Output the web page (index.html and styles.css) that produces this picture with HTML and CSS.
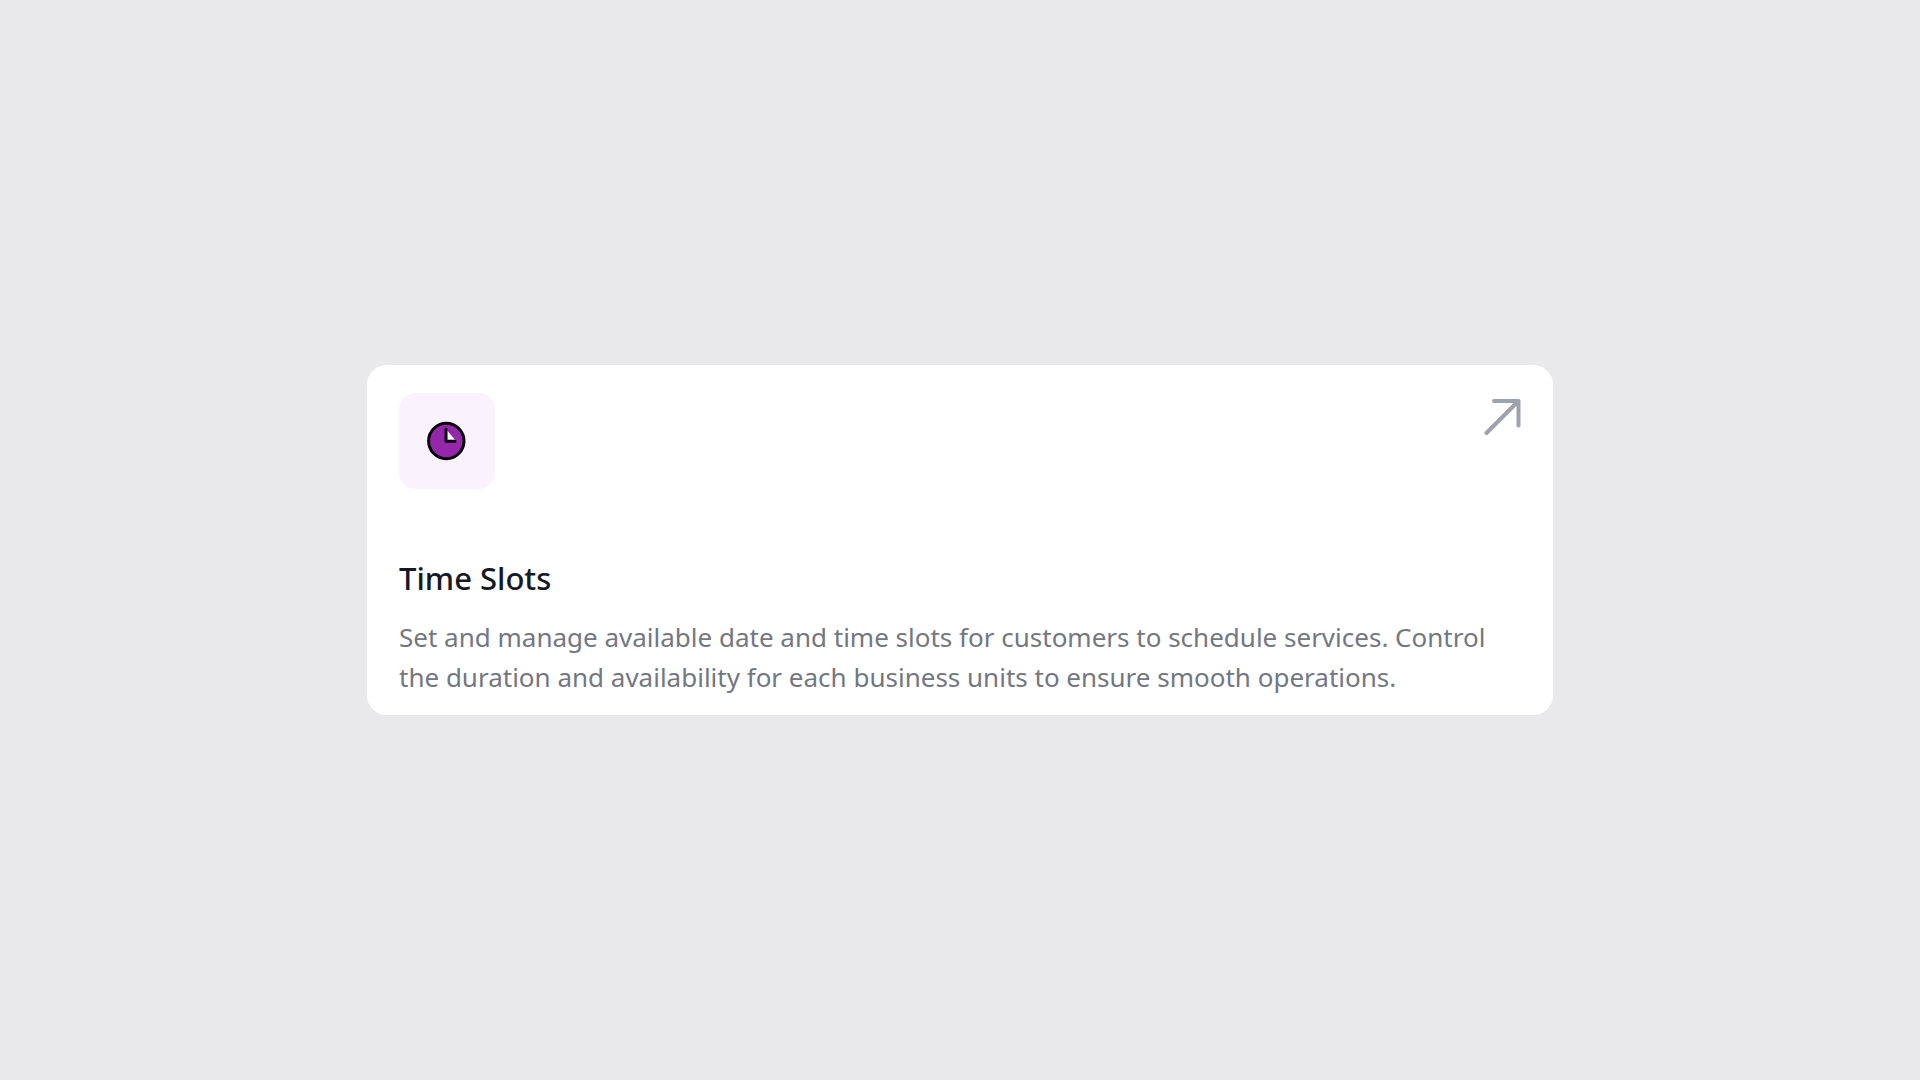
FILE: index.html
```html
<!DOCTYPE html>
<html lang="en">
<head>
  <meta charset="utf-8">
  <meta name="viewport" content="width=device-width, initial-scale=1">
  <title>Time Slots</title>
  <link rel="stylesheet" href="styles.css">
</head>
<body>
  <main class="page">
    <article class="card">
      <header class="card-header">
        <span class="card-icon">
          <svg width="40" height="40" viewBox="0 0 40 40" fill="none" stroke="#050008" stroke-width="3" stroke-linecap="round" stroke-linejoin="round" aria-hidden="true">
            <circle cx="19.300" cy="20" r="17.7" fill="#9527ab"/>
            <path d="M19 8V20H29Z" fill="#faf3fe" stroke="none"/>
            <path d="M19 8V20.300H28"/>
          </svg>
        </span>
        <a class="card-link" href="#time-slots" aria-label="Open Time Slots">
          <svg width="38" height="38" viewBox="0 0 38 38" fill="none" stroke="#9ca3af" stroke-width="4" stroke-linecap="round" stroke-linejoin="round" aria-hidden="true">
            <path d="M3.500 35 35.500 3M11 3H35.500V27.500"/>
          </svg>
        </a>
      </header>
      <h2 class="card-title" id="time-slots">Time Slots</h2>
      <p class="card-text">Set and manage available date and time slots for customers to schedule services. Control the duration and availability for each business units to ensure smooth operations.</p>
    </article>
  </main>
</body>
</html>
```
FILE: styles.css
```css
* {
  box-sizing: border-box;
}

body {
  margin: 0;
  background: #e9e9eb;
  font-family: "Segoe UI", "Noto Sans", sans-serif;
}

.page {
  display: flex;
  align-items: center;
  justify-content: center;
  min-height: 100vh;
  padding: 24px;
}

.card {
  width: 100%;
  max-width: 1186px;
  padding: 28px 32px 18px;
  border-radius: 20px;
  background: #fff;
}

.card-header {
  display: flex;
  align-items: flex-start;
  justify-content: space-between;
}

.card-icon {
  display: flex;
  align-items: center;
  justify-content: center;
  width: 96px;
  height: 96px;
  border-radius: 16px;
  background: #faf3fe;
}

.card-link {
  display: flex;
  padding-top: 5px;
}

.card-title {
  margin: 69px 0 0;
  color: #151825;
  font-size: 31px;
  font-weight: 500;
  line-height: 40px;
}

.card-text {
  margin: 19px 0 0;
  color: #737780;
  font-size: 26px;
  line-height: 40px;
}
```
